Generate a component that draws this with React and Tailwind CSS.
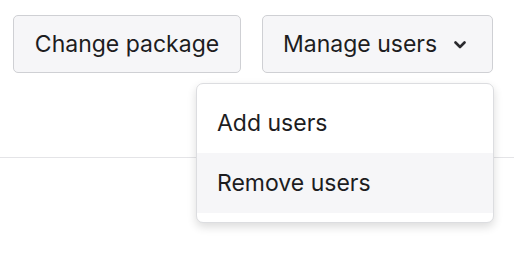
export default function App() {
  return (
    <div className="w-[514px] h-[253px] bg-white relative" style={{ fontFamily: 'Inter, "Noto Sans", sans-serif' }}>
      <div className="h-[158px] border-b border-[#e4e4e7] flex justify-end items-start gap-[21px] pt-[15px] pr-[21px]">
        <button className="h-[58px] w-[228px] rounded-[5px] border border-[#cfd0d4] bg-[#f6f6f8] text-[23px] text-[#1d1d1f] flex items-center justify-center">
          Change package
        </button>
        <div className="relative">
          <button className="h-[58px] w-[231px] rounded-[5px] border border-[#cfd0d4] bg-[#f6f6f8] text-[23px] text-[#1d1d1f] flex items-center pl-[20px] gap-[17px]">
            <span>Manage users</span>
            <svg width="12" height="8" viewBox="0 0 12 8" className="mt-[1px]">
              <path d="M1.5 1.5 L6 6 L10.5 1.5" fill="none" stroke="#2a2a2e" strokeWidth="2.6" strokeLinecap="round" strokeLinejoin="round" />
            </svg>
          </button>
          <div className="absolute right-[-1px] top-[68px] w-[298px] rounded-[7px] border border-[#dcdde0] bg-white py-[9px] shadow-[0_4px_10px_rgba(0,0,0,0.14)] z-10">
            <div className="h-[60px] flex items-center pl-[20px] text-[23px] text-[#1d1d1f]">Add users</div>
            <div className="h-[60px] flex items-center pl-[20px] text-[23px] text-[#1d1d1f] bg-[#f6f6f8]">Remove users</div>
          </div>
        </div>
      </div>
    </div>
  );
}
